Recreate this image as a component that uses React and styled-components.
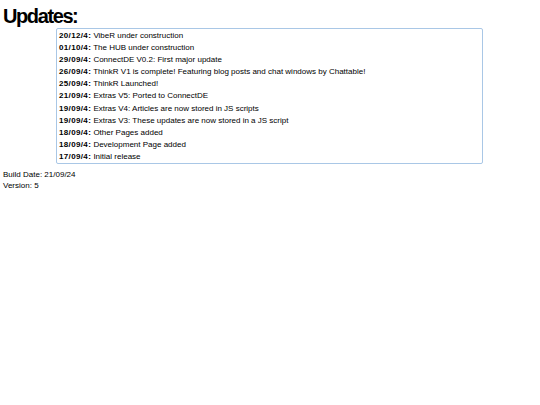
import React from "react";
import styled, { createGlobalStyle } from "styled-components";

const Global = createGlobalStyle`
  html, body { margin: 0; padding: 0; background: #ffffff; }
  body { font-family: "Liberation Sans", Arial, sans-serif; color: #000; }
`;

const Page = styled.div`
  padding: 5px 0 0 3px;
`;

const Title = styled.h1`
  margin: 0;
  font-family: "Liberation Sans", Arial, sans-serif;
  font-size: 20px;
  font-weight: bold;
  letter-spacing: -1.4px;
  line-height: 23px;
  color: #000;
`;

const UpdateBox = styled.div`
  margin-left: 53px;
  width: 427px;
  box-sizing: border-box;
  border: 1px solid #a9c7e6;
  border-radius: 2px;
  padding: 1px 2px 0 2px;
`;

const Row = styled.div`
  font-size: 8px;
  line-height: 12.1px;
  white-space: nowrap;
  color: #000;
`;

const DateLabel = styled.b`
  font-weight: bold;
  letter-spacing: 0.35px;
`;

const Footer = styled.div`
  margin-top: 5px;
  font-size: 8px;
  line-height: 11px;
`;

const updates = [
  ["20/12/4:", "VibeR under construction"],
  ["01/10/4:", "The HUB under construction"],
  ["29/09/4:", "ConnectDE V0.2: First major update"],
  ["26/09/4:", "ThinkR V1 is complete! Featuring blog posts and chat windows by Chattable!"],
  ["25/09/4:", "ThinkR Launched!"],
  ["21/09/4:", "Extras V5: Ported to ConnectDE"],
  ["19/09/4:", "Extras V4: Articles are now stored in JS scripts"],
  ["19/09/4:", "Extras V3: These updates are now stored in a JS script"],
  ["18/09/4:", "Other Pages added"],
  ["18/09/4:", "Development Page added"],
  ["17/09/4:", "Initial release"],
];

export default function App() {
  return (
    <>
      <Global />
      <Page>
        <Title>Updates:</Title>
        <UpdateBox>
          {updates.map(([d, t], i) => (
            <Row key={i}>
              <DateLabel>{d}</DateLabel> {t}
            </Row>
          ))}
        </UpdateBox>
        <Footer>
          <div>Build Date: 21/09/24</div>
          <div>Version: 5</div>
        </Footer>
      </Page>
    </>
  );
}
